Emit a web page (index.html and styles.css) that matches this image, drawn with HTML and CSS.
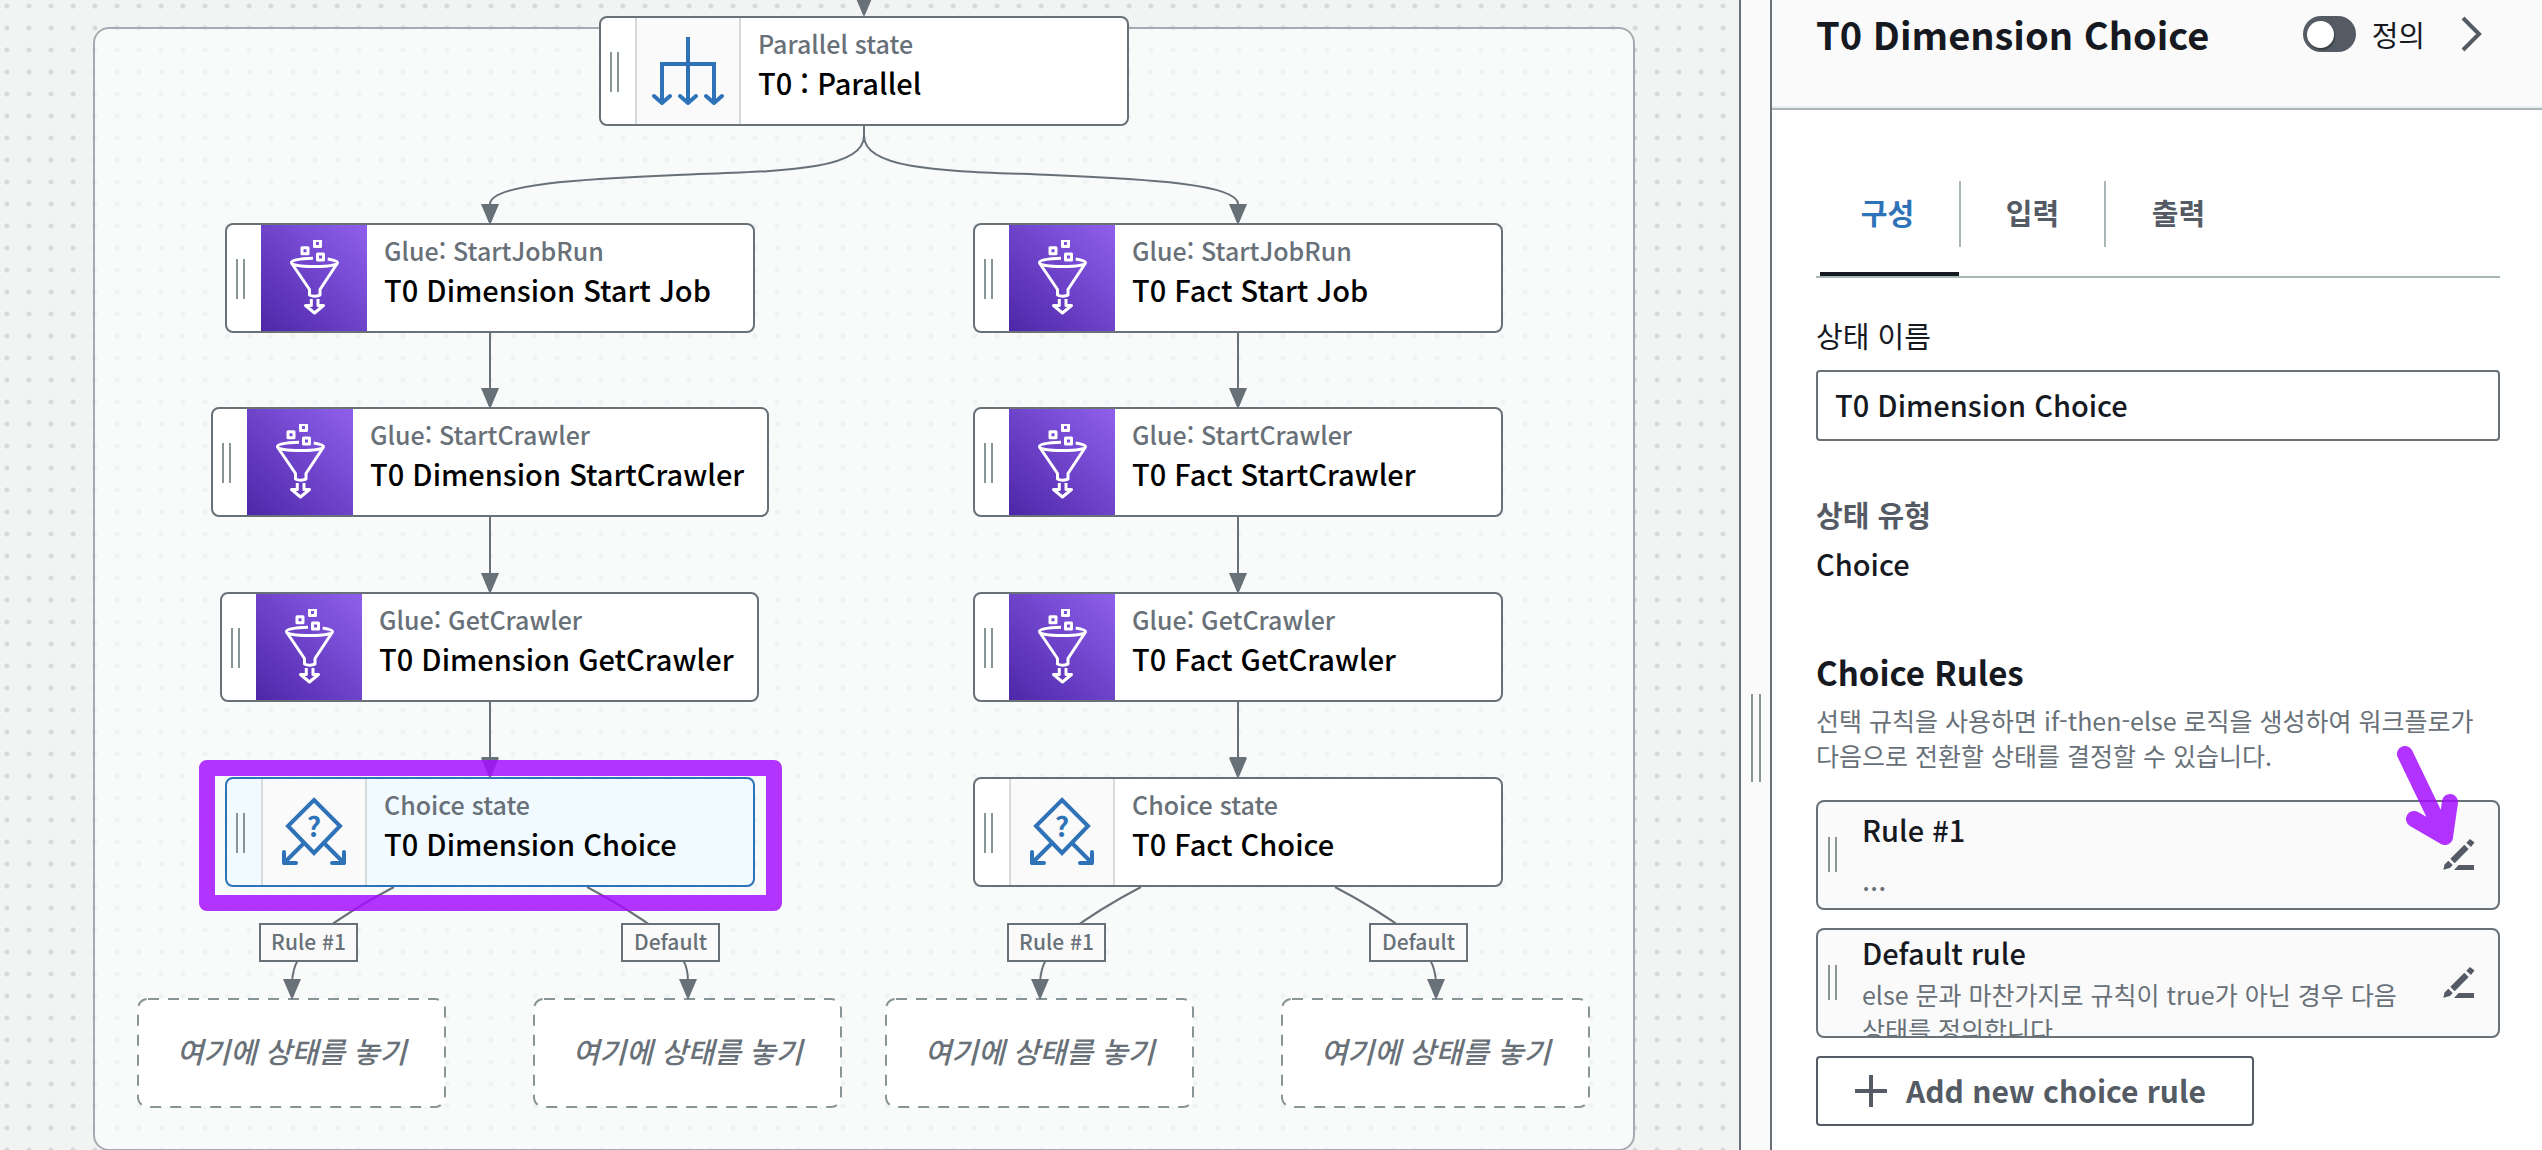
FILE: index.html
```html
<!DOCTYPE html>
<html lang="ko">
<head>
<meta charset="utf-8">
<title>Workflow Studio</title>
<link rel="stylesheet" href="styles.css">
</head>
<body>
<svg class="defs" aria-hidden="true">
  <defs>
    <marker id="arrow" viewBox="0 0 18 21" markerWidth="18" markerHeight="21" refX="0" refY="9" markerUnits="userSpaceOnUse" orient="auto">
      <path d="M0 0.5L21 9L0 17.5z" fill="#687078"/>
    </marker>
    <symbol id="icon-parallel" viewBox="0 0 72 72">
      <g fill="none" stroke="#2e73b8" stroke-width="4">
        <path d="M36 2V68M10 68V29H62V68"/>
        <path stroke-linecap="round" stroke-linejoin="round" d="M2 61l8 7 8-7M28 61l8 7 8-7M54 61l8 7 8-7"/>
      </g>
    </symbol>
    <symbol id="icon-choice" viewBox="0 0 72 72">
      <g fill="none" stroke="#2e73b8" stroke-width="4" stroke-linecap="round" stroke-linejoin="round">
        <path stroke-linejoin="miter" d="M36 4L62 30L36 57L10 30z"/>
        <path d="M26 47L6 67M46 47L66 67M6 56V67H18M66 56V67H54"/>
      </g>
      <text class="glyph" x="36" y="41" text-anchor="middle">?</text>
    </symbol>
    <symbol id="icon-glue" viewBox="0 0 72 76">
      <g fill="none" stroke="#fff" stroke-width="3" stroke-linejoin="round">
        <path d="M36.500 0.500h6v6h-6zM24 7.700h6v6h-6zM39.500 14h6v6h-6z"/>
        <path d="M35 18.300C22 18.700 13.500 20 13.500 22.500S22 26.500 36.500 26.500S59.500 25 59.500 22.500C59.500 21 56 20 49.700 19"/>
        <path d="M13.500 23L31.500 49.500V55C34 56.500 40 56.500 42 55V49.500L59.500 23"/>
        <path d="M33.300 59V65.500H27.500L36.500 73L45.500 65.500H40V59"/>
      </g>
    </symbol>
    <symbol id="icon-edit" viewBox="0 0 34 34">
      <path fill="#545b64" d="M28 1L32.500 4.500L29 9L24.300 4.700zM22.300 6.700L26.700 11L12.700 25.300L8.300 20.700zM6.300 22.700L10.700 27L8 30L1.300 31.700L2.500 26.500zM16.700 27H32V32H12z"/>
    </symbol>
  </defs>
</svg>

<main class="studio">
  <section class="canvas">
    <div class="group"></div>
    <svg class="edges" aria-hidden="true">
      <g marker-end="url(#arrow)">
        <path d="M864 -30V-4"/>
        <path d="M864 126V136C864 172 771 171 677 175S490 184 490 204"/>
        <path d="M864 126V136C864 172 957 171 1051 175S1238 184 1238 204"/>
        <path d="M490 332V388"/><path d="M490 517V573"/><path d="M490 702V757"/>
        <path d="M1238 332V388"/><path d="M1238 517V573"/><path d="M1238 702V757"/>
      </g>
      <path d="M394 887Q352 909 320 933"/><path d="M587 887Q629 909 661 933"/>
      <path d="M1141 887Q1099 909 1067 933"/><path d="M1335 887Q1377 909 1409 933"/>
      <path d="M298 960Q293 968 292 982"/><path d="M683 960Q688 968 688 982"/>
      <path d="M1046 960Q1041 968 1040 982"/><path d="M1430 960Q1435 968 1436 982"/>
    </svg>

    <article class="node parallel">
      <i class="grip"></i><span class="pic"><svg><use href="#icon-parallel"/></svg></span>
      <div class="info"><p class="kind">Parallel state</p><p class="name">T0 : Parallel</p></div>
    </article>

    <article class="node dim-job">
      <i class="grip"></i><span class="pic glue"><svg><use href="#icon-glue"/></svg></span>
      <div class="info"><p class="kind">Glue: StartJobRun</p><p class="name">T0 Dimension Start Job</p></div>
    </article>
    <article class="node dim-start">
      <i class="grip"></i><span class="pic glue"><svg><use href="#icon-glue"/></svg></span>
      <div class="info"><p class="kind">Glue: StartCrawler</p><p class="name">T0 Dimension StartCrawler</p></div>
    </article>
    <article class="node dim-get">
      <i class="grip"></i><span class="pic glue"><svg><use href="#icon-glue"/></svg></span>
      <div class="info"><p class="kind">Glue: GetCrawler</p><p class="name">T0 Dimension GetCrawler</p></div>
    </article>
    <article class="node dim-choice selected">
      <i class="grip"></i><span class="pic"><svg><use href="#icon-choice"/></svg></span>
      <div class="info"><p class="kind">Choice state</p><p class="name">T0 Dimension Choice</p></div>
    </article>

    <article class="node fact-job">
      <i class="grip"></i><span class="pic glue"><svg><use href="#icon-glue"/></svg></span>
      <div class="info"><p class="kind">Glue: StartJobRun</p><p class="name">T0 Fact Start Job</p></div>
    </article>
    <article class="node fact-start">
      <i class="grip"></i><span class="pic glue"><svg><use href="#icon-glue"/></svg></span>
      <div class="info"><p class="kind">Glue: StartCrawler</p><p class="name">T0 Fact StartCrawler</p></div>
    </article>
    <article class="node fact-get">
      <i class="grip"></i><span class="pic glue"><svg><use href="#icon-glue"/></svg></span>
      <div class="info"><p class="kind">Glue: GetCrawler</p><p class="name">T0 Fact GetCrawler</p></div>
    </article>
    <article class="node fact-choice">
      <i class="grip"></i><span class="pic"><svg><use href="#icon-choice"/></svg></span>
      <div class="info"><p class="kind">Choice state</p><p class="name">T0 Fact Choice</p></div>
    </article>

    <span class="tag tag-1">Rule #1</span>
    <span class="tag tag-2">Default</span>
    <span class="tag tag-3">Rule #1</span>
    <span class="tag tag-4">Default</span>

    <div class="drop drop-1"><svg><rect x="1" y="1" width="307" height="108" rx="10"/></svg><span>여기에 상태를 놓기</span></div>
    <div class="drop drop-2"><svg><rect x="1" y="1" width="307" height="108" rx="10"/></svg><span>여기에 상태를 놓기</span></div>
    <div class="drop drop-3"><svg><rect x="1" y="1" width="307" height="108" rx="10"/></svg><span>여기에 상태를 놓기</span></div>
    <div class="drop drop-4"><svg><rect x="1" y="1" width="307" height="108" rx="10"/></svg><span>여기에 상태를 놓기</span></div>

    <svg class="edges" aria-hidden="true">
      <path class="tip" d="M481 204h18l-9 21zM1229 204h18l-9 21zM481 388h18l-9 21zM1229 388h18l-9 21zM481 573h18l-9 21zM1229 573h18l-9 21zM481 758h18l-9 21zM1229 758h18l-9 21zM855 -4h18l-9 21z"/>
      <path class="tip" d="M283 979h18l-9 21zM679 979h18l-9 21zM1031 979h18l-9 21zM1427 979h18l-9 21z"/>
    </svg>
    <div class="highlight"></div>
  </section>

  <div class="splitter"><i class="grip"></i></div>

  <aside class="panel">
    <header class="panel-head">
      <h1>T0 Dimension Choice</h1>
      <label class="switch"><input type="checkbox" role="switch"><span>정의</span></label>
      <button class="collapse" type="button" aria-label="닫기">
        <svg viewBox="0 0 24 36"><path d="M3 2L19 18L3 34" fill="none" stroke="#545b64" stroke-width="4"/></svg>
      </button>
    </header>
    <div class="panel-body">
      <nav class="tabs">
        <button class="active" type="button"><span>구성</span></button>
        <button type="button"><span>입력</span></button>
        <button type="button"><span>출력</span></button>
      </nav>

      <div class="field">
        <label for="state-name">상태 이름</label>
        <input id="state-name" type="text" value="T0 Dimension Choice">
      </div>

      <dl class="field">
        <dt>상태 유형</dt>
        <dd>Choice</dd>
      </dl>

      <section class="rules">
        <h2>Choice Rules</h2>
        <p class="hint">선택 규칙을 사용하면 if-then-else 로직을 생성하여 워크플로가 다음으로 전환할 상태를 결정할 수 있습니다.</p>
        <div class="rule spaced">
          <i class="grip"></i>
          <div class="rule-text"><h3>Rule #1</h3><p>...</p></div>
          <button type="button" aria-label="편집"><svg><use href="#icon-edit"/></svg></button>
          <svg class="pointer" viewBox="0 0 65 105" aria-hidden="true"><path d="M10 10L50 93M19 75L50 93L55 58"/></svg>
        </div>
        <div class="rule">
          <i class="grip"></i>
          <div class="rule-text"><h3>Default rule</h3><p>else 문과 마찬가지로 규칙이 true가 아닌 경우 다음 상태를 정의합니다.</p></div>
          <button type="button" aria-label="편집"><svg><use href="#icon-edit"/></svg></button>
        </div>
        <button class="add" type="button">
          <svg viewBox="0 0 32 32"><path d="M16 0V32M0 16H32" stroke="#545b64" stroke-width="4"/></svg>
          <span>Add new choice rule</span>
        </button>
      </section>
    </div>
  </aside>
</main>
</body>
</html>
```
FILE: styles.css
```css
* { box-sizing: border-box; }

body {
  margin: 0;
  font-family: "Noto Sans CJK KR", "Noto Sans", sans-serif;
  color: #16191f;
  background: #fff;
  overflow: hidden;
}

h1, h2, h3, p, dl, dd { margin: 0; }
button { font: inherit; color: inherit; background: none; border: 0; padding: 0; }
.defs { position: absolute; width: 0; height: 0; }

.studio { display: flex; height: 100vh; }

/* canvas */
.canvas {
  position: relative;
  flex: 1;
  overflow: hidden;
  background-color: #f2f4f3;
  background-image: radial-gradient(circle, #d5dbdb 2px, transparent 3px);
  background-size: 22px 22px;
  background-position: -4px -5px;
}
.group {
  position: absolute;
  left: 93px;
  top: 27px;
  width: 1542px;
  height: 1124px;
  border: 2px solid #a5abb0;
  border-radius: 16px;
  background: rgba(251, 252, 252, .72);
}
.edges {
  position: absolute;
  inset: 0;
  width: 100%;
  height: 100%;
  fill: none;
  stroke: #687078;
  stroke-width: 2;
}
.edges .tip { fill: #687078; stroke: none; }

.node {
  position: absolute;
  display: flex;
  width: 530px;
  height: 110px;
  border: 2px solid #687078;
  border-radius: 8px;
  background: #fff;
  overflow: hidden;
}
.parallel { left: 599px; top: 16px; }
.dim-job { left: 225px; top: 223px; }
.dim-start { left: 211px; top: 407px; width: 558px; }
.dim-get { left: 220px; top: 592px; width: 539px; }
.dim-choice { left: 225px; top: 777px; }
.fact-job { left: 973px; top: 223px; }
.fact-start { left: 973px; top: 407px; }
.fact-get { left: 973px; top: 592px; }
.fact-choice { left: 973px; top: 777px; }
.selected { border-color: #2e73b8; background: #f1faff; }

.grip {
  width: 9px;
  height: 40px;
  border: solid #879596;
  border-width: 0 2px;
}
.node .grip { margin: 34px 16px 0 9px; }
.pic {
  display: flex;
  flex: none;
  align-items: center;
  justify-content: center;
  width: 106px;
  border: solid #d5dbdb;
  border-width: 0 2px;
  background: #fafafa;
}
.pic svg { width: 72px; height: 72px; }
.glue { border: 0; background: linear-gradient(45deg, #4d27a8, #8f60ec); }
.glue svg { height: 76px; }
.glyph { font-size: 28px; font-weight: 700; fill: #2e73b8; }
.info { padding: 7px 17px; white-space: nowrap; font-weight: 500; }
.kind { font-size: 25px; line-height: 36px; color: #687078; }
.name { font-size: 29px; line-height: 42px; color: #000; }

.tag {
  position: absolute;
  top: 923px;
  width: 99px;
  height: 39px;
  border: 2px solid #687078;
  background: #fafafa;
  color: #687078;
  font-size: 21px;
  font-weight: 500;
  line-height: 33px;
  text-align: center;
}
.tag-1 { left: 259px; }
.tag-2 { left: 621px; }
.tag-3 { left: 1007px; }
.tag-4 { left: 1369px; }

.drop {
  position: absolute;
  top: 998px;
  display: flex;
  align-items: center;
  justify-content: center;
  width: 309px;
  height: 110px;
  padding-bottom: 6px;
  color: #687078;
  font-size: 29px;
  font-style: italic;
  font-weight: 500;
}
.drop svg { position: absolute; inset: 0; width: 100%; height: 100%; }
.drop rect { fill: #fff; stroke: #879596; stroke-width: 2; stroke-dasharray: 11 9; }
.drop span { position: relative; }
.drop-1 { left: 137px; }
.drop-2 { left: 533px; }
.drop-3 { left: 885px; }
.drop-4 { left: 1281px; }

.highlight {
  position: absolute;
  left: 199px;
  top: 760px;
  width: 583px;
  height: 151px;
  border: 16px solid rgba(164, 13, 255, .84);
  border-radius: 8px;
}

/* splitter */
.splitter {
  display: flex;
  justify-content: center;
  width: 33px;
  padding-top: 694px;
  border: solid #687078;
  border-width: 0 2px;
  background: #fafafa;
}
.splitter .grip { width: 10px; height: 88px; }

/* panel */
.panel { width: 770px; background: #fff; }
.panel-head {
  display: flex;
  align-items: center;
  height: 110px;
  padding: 7px 58px 47px 44px;
  border-bottom: 2px solid #aab7b8;
  background: #fafafa;
  box-shadow: inset 0 -2px 0 #eaeded;
}
h1 { flex: 1; font-size: 38px; line-height: 54px; }
.switch { display: flex; align-items: center; gap: 16px; font-size: 29px; }
.switch input {
  appearance: none;
  display: flex;
  align-items: center;
  width: 53px;
  height: 36px;
  margin: 0;
  padding-left: 4px;
  border-radius: 18px;
  background: #545b64;
}
.switch input::before {
  content: "";
  width: 27px;
  height: 27px;
  border-radius: 50%;
  background: #fff;
  box-shadow: 1px 2px 1px rgba(0, 0, 0, .3);
}
.collapse { width: 24px; height: 36px; margin-left: 35px; }
.collapse svg { display: block; width: 24px; height: 36px; }

.panel-body { padding: 71px 42px 0 44px; }
.tabs { display: flex; height: 97px; border-bottom: 2px solid #aab7b8; }
.tabs button {
  position: relative;
  width: 145px;
  height: 95px;
  padding-bottom: 29px;
  color: #545b64;
  font-size: 29px;
  font-weight: 700;
  line-height: 62px;
}
.tabs span { display: block; height: 66px; border-right: 2px solid #aab7b8; }
.tabs button:last-child span { border: 0; }
.tabs .active { color: #2e73b8; }
.tabs .active::after {
  content: "";
  position: absolute;
  left: 4px;
  right: 2px;
  bottom: 0;
  height: 4px;
  background: #16191f;
}

.field { display: flex; flex-direction: column; font-size: 29px; line-height: 40px; }
.field dt { margin-bottom: 9px; color: #545b64; font-weight: 700; }
.field dd { font-weight: 500; }
div.field { gap: 15px; margin: 37px 0 53px; }
.field input {
  height: 71px;
  padding: 0 17px 4px;
  border: 2px solid #687078;
  border-radius: 4px;
  font: inherit;
  font-weight: 500;
  color: inherit;
}

.rules { margin-top: 67px; }
h2 { font-size: 33px; line-height: 44px; }
.hint { margin: 9px 0 27px; color: #687078; font-size: 25px; line-height: 35px; word-break: keep-all; }
.rule {
  position: relative;
  display: flex;
  height: 110px;
  margin-bottom: 18px;
  padding: 0 22px 0 10px;
  border: 2px solid #687078;
  border-radius: 8px;
  background: #fafafa;
}
.rule .grip { height: 35px; margin: 35px 25px 0 0; }
.rule-text { flex: 1; overflow: hidden; padding-top: 2px; }
.rule-text h3 { font-size: 29px; line-height: 40px; font-weight: 500; }
.rule-text p { margin-top: 5px; color: #687078; font-size: 25px; line-height: 35px; word-break: keep-all; }
.spaced .rule-text { padding-top: 7px; }
.spaced .rule-text p { margin-top: 12px; font-size: 29px; }
.rule button { width: 34px; margin-left: 42px; }
.rule button svg { display: block; width: 34px; height: 34px; }
.pointer {
  position: absolute;
  right: 38px;
  top: -58px;
  width: 65px;
  height: 105px;
  fill: none;
  stroke: rgb(164, 13, 255);
  stroke-width: 16;
  stroke-linecap: round;
  stroke-linejoin: round;
  opacity: .84;
}
.add {
  display: flex;
  align-items: center;
  gap: 19px;
  height: 70px;
  padding: 0 46px 0 37px;
  border: 2px solid #545b64;
  border-radius: 4px;
  color: #545b64;
  font-size: 30px;
  font-weight: 700;
}
.add span { padding-bottom: 3px; }
.add svg { width: 32px; height: 32px; }
```
